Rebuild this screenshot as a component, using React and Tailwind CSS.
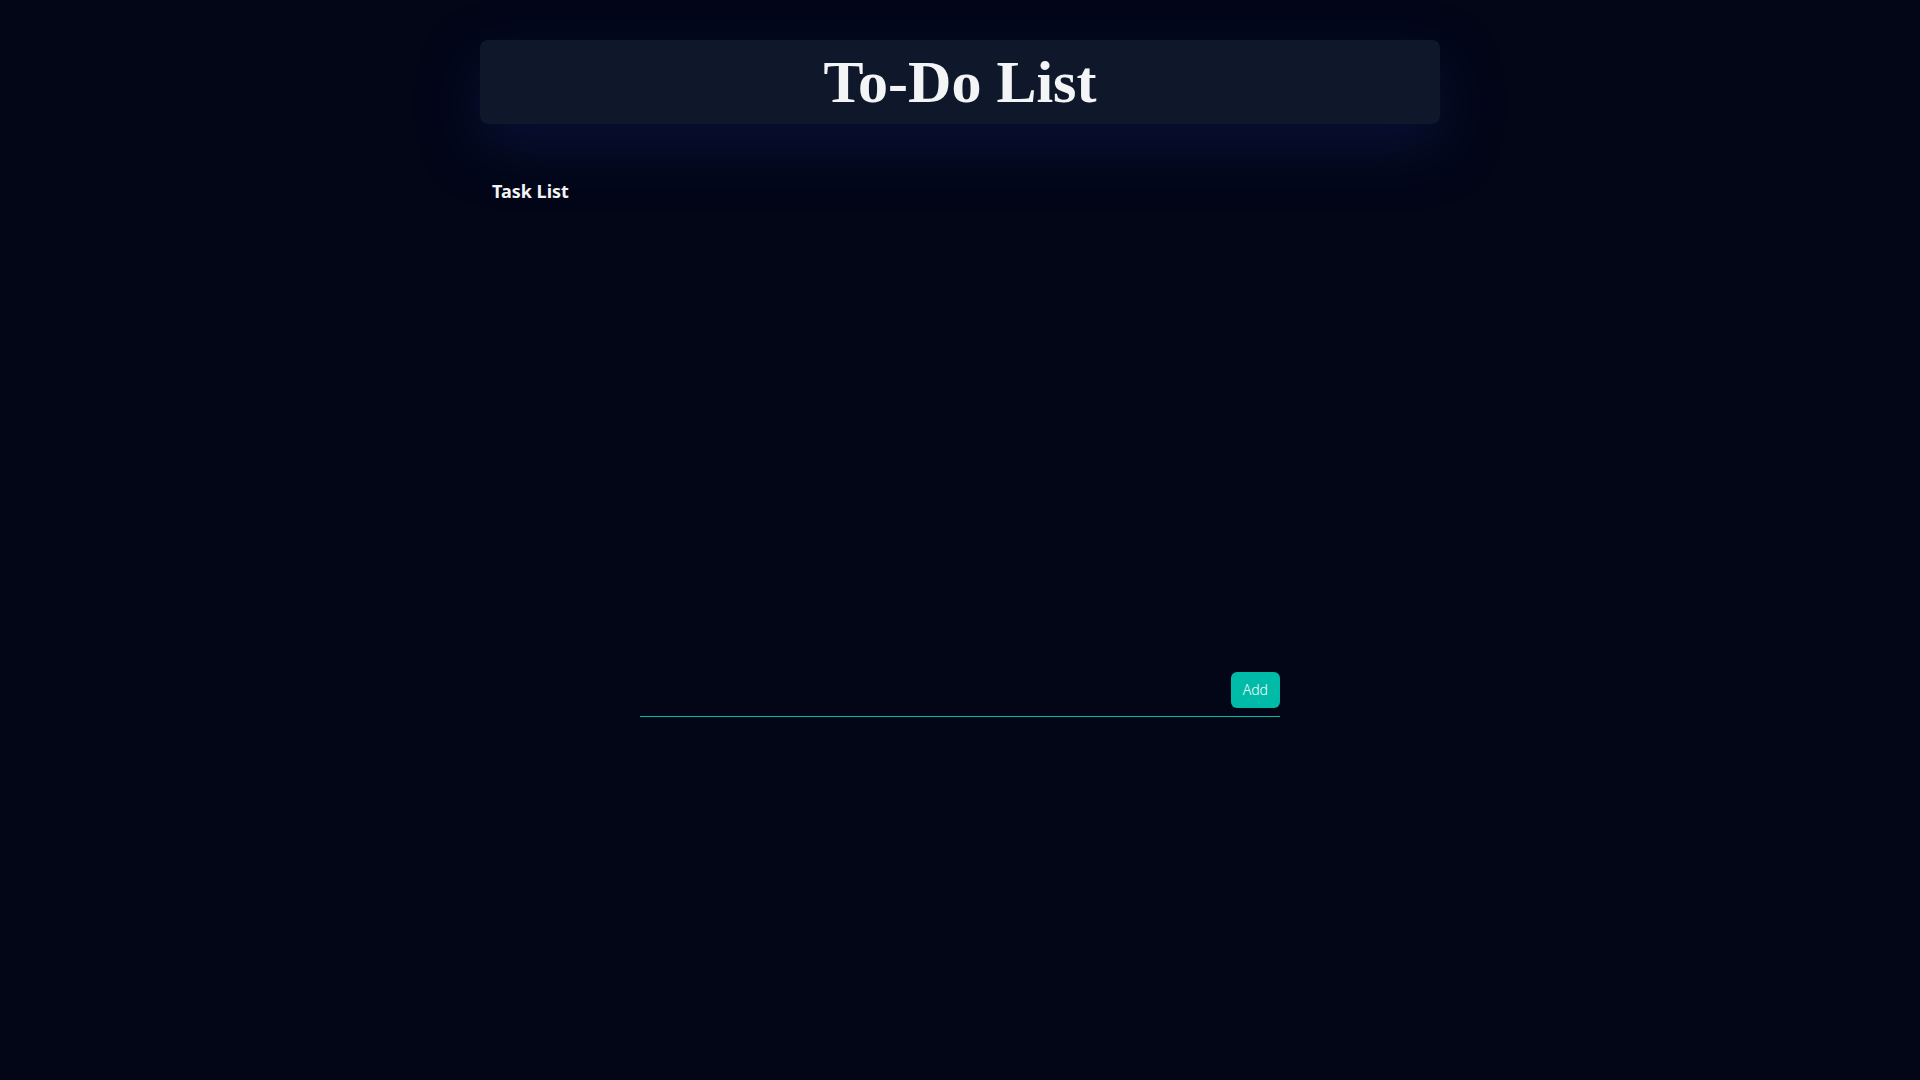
export default function App() {
  return (
    <div className="min-h-screen bg-[#020617] font-['Noto_Sans',sans-serif]">
      <div className="mx-auto w-[960px] pt-10">
        {/* Header */}
        <header className="rounded-lg bg-[#0f172a] py-3 text-center shadow-[0_22px_60px_rgba(23,37,110,0.35)]">
          <h1 className="font-['Liberation_Serif',serif] text-6xl leading-none font-bold text-gray-100">
            To-Do List
          </h1>
        </header>

        {/* Task list */}
        <section className="mt-[53px] px-3">
          <h2 className="text-lg leading-7 font-bold text-gray-100">Task List</h2>
          <ul className="h-[467px]"></ul>
        </section>

        {/* Add form */}
        <form
          className="mx-auto flex w-[640px] items-center gap-2 border-b border-teal-500 pb-2"
          onSubmit={(e) => e.preventDefault()}
        >
          <input
            type="text"
            className="h-9 flex-1 bg-transparent px-2 text-sm text-gray-100 outline-none"
          />
          <button
            type="submit"
            className="h-9 rounded-md bg-teal-500 px-3 text-sm font-light text-white"
          >
            Add
          </button>
        </form>
      </div>
    </div>
  );
}
